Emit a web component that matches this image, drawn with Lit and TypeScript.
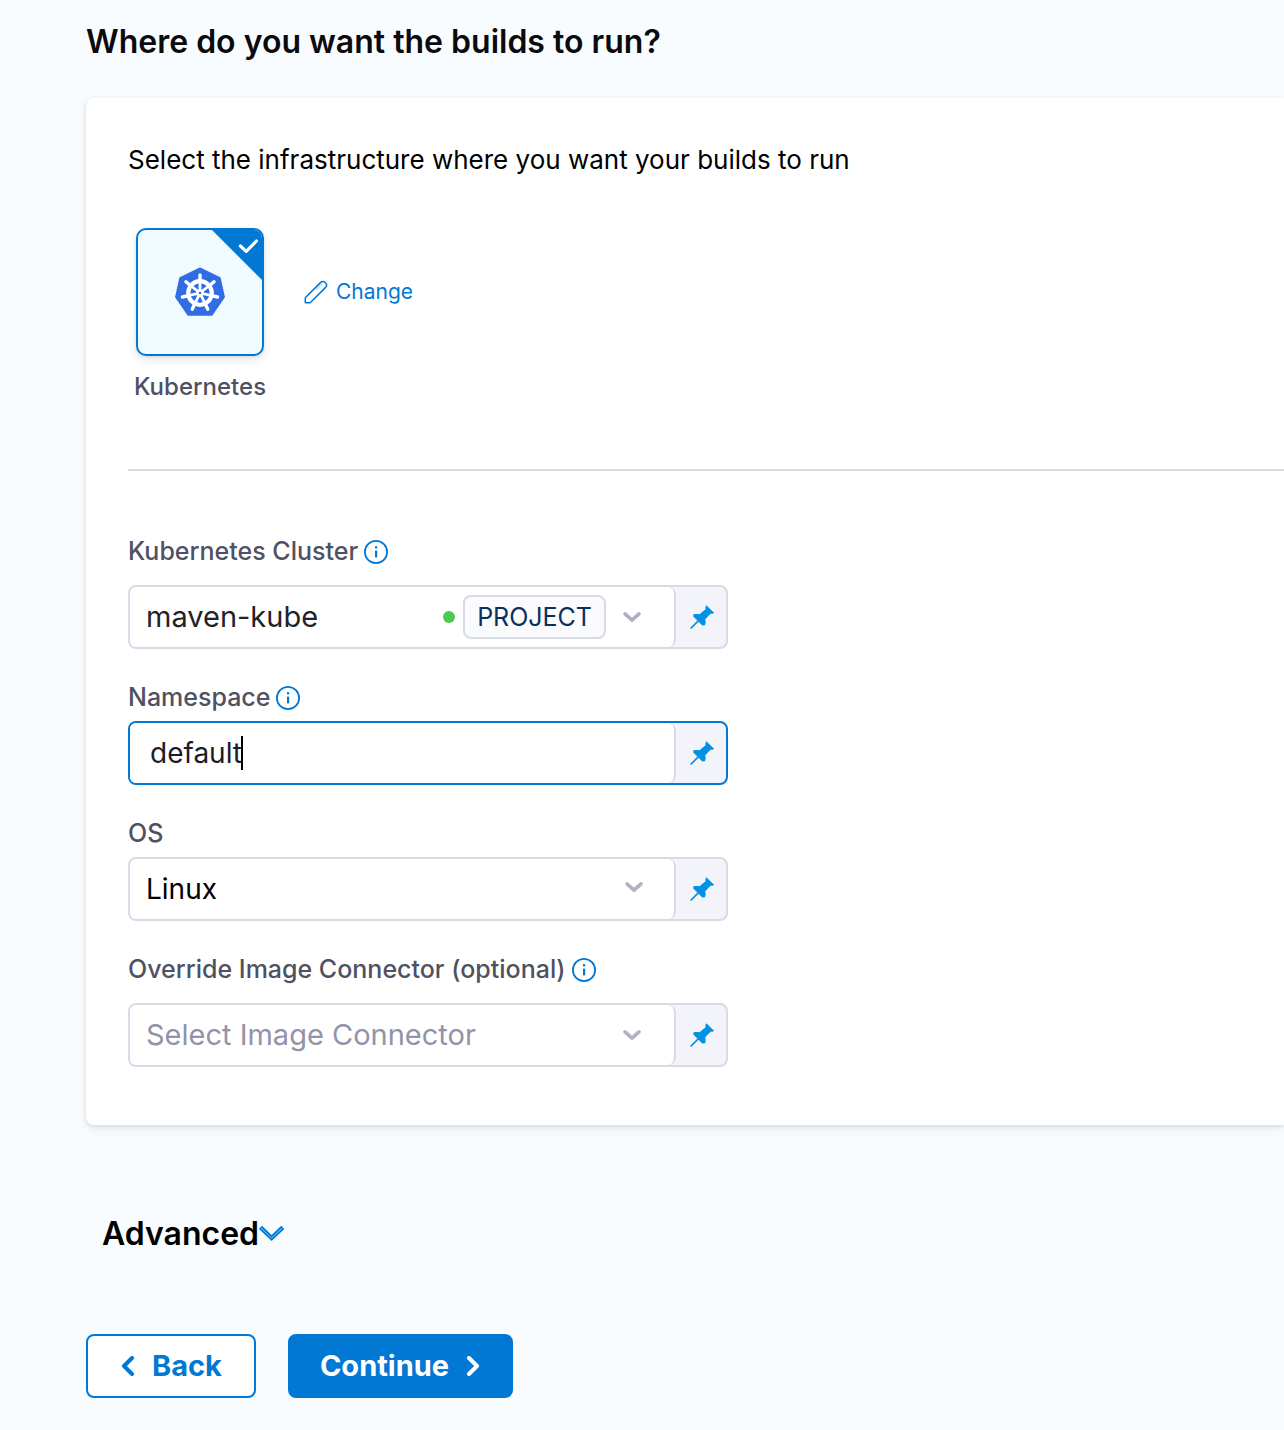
import { LitElement, html, svg, css } from "lit";
import { customElement, state } from "lit/decorators.js";

const FONT = css`Inter, "Liberation Sans", sans-serif`;

const spokeAngles = [0, 1, 2, 3, 4, 5, 6].map((i) => (i * 360) / 7);

const kubernetesLogo = html`
  <svg class="k8s" viewBox="0 0 50 50" aria-hidden="true">
    <path
      d="M25 1.2 45 10.8 49.2 30 36.8 48 13.2 48 0.8 30 5 10.8Z"
      fill="#326ce5" stroke="#326ce5" stroke-width="1.4" stroke-linejoin="round"
    />
    <circle cx="25" cy="26" r="11.8" fill="none" stroke="#fff" stroke-width="4.2" />
    ${spokeAngles.map(
      (a) => svg`<g transform="rotate(${a} 25 26)" stroke="#fff" stroke-linecap="round">
        <path d="M25 26V14" stroke-width="2.8" />
        <path d="M25 13V8" stroke-width="3.4" />
      </g>`
    )}
    <circle cx="25" cy="26" r="3.8" fill="#fff" />
    <circle cx="25" cy="26" r="1.2" fill="#326ce5" />
  </svg>
`;

const infoIcon = html`
  <svg class="info" viewBox="0 0 24 24" aria-hidden="true">
    <circle cx="12" cy="12" r="11.1" fill="none" stroke="currentColor" stroke-width="1.8" />
    <rect x="11" y="6.2" width="2.2" height="2.2" fill="currentColor" />
    <rect x="11" y="10.6" width="2.2" height="6.8" fill="currentColor" />
  </svg>
`;

const pinIcon = html`
  <svg class="pin" viewBox="0 0 24 24" aria-hidden="true">
    <path
      fill="currentColor"
      d="M16.4 0.3 24 7.7C23 8.8 21.8 9 20.6 8.8L15.2 14.2C15.8 16.4 15.8 18.6 15 20.2L12.2 20.4 8.6 16.8 1.2 24 0 22.9 7.4 15.6 3.2 11.6 3.4 9.4C5.4 8.8 7.4 8.8 9.4 9.2L15.6 4.2C15.2 2.8 15.4 1.4 16.4 0.3Z"
    />
  </svg>
`;

const chevronDown = html`
  <svg class="chevron" viewBox="0 0 20 12" aria-hidden="true">
    <path d="M3 2.8 10 9.2 17 2.8" fill="none" stroke="currentColor" stroke-width="3.6" stroke-linecap="round" stroke-linejoin="round" />
  </svg>
`;

@customElement("pinned-field")
export class PinnedField extends LitElement {
  static properties = { focused: { type: Boolean, reflect: true } };
  declare focused: boolean;

  static styles = css`
    :host {
      display: flex;
      box-sizing: border-box;
      height: 64px;
      border: 2px solid #d9dae6;
      border-radius: 8px;
      background: #f3f3fa;
      overflow: hidden;
    }
    :host([focused]) {
      border-color: #0278d5;
    }
    .content {
      display: flex;
      flex: 1;
      min-width: 0;
      box-sizing: border-box;
      background: #fff;
      border-right: 2px solid #d9dae6;
      border-radius: 0 8px 8px 0;
    }
    .type {
      display: flex;
      flex: none;
      align-items: center;
      justify-content: center;
      width: 50px;
      padding: 0 0 0 2px;
      border: 0;
      background: none;
      color: #0092e4;
      cursor: pointer;
    }
    .pin {
      width: 24px;
      height: 24px;
    }
  `;

  render() {
    return html`
      <div class="content"><slot></slot></div>
      <button class="type" type="button" aria-label="Fixed value">${pinIcon}</button>
    `;
  }
}

@customElement("app-root")
export class AppRoot extends LitElement {
  @state() private namespace = "default";

  static styles = css`
    :host {
      display: block;
      box-sizing: border-box;
      min-height: 100vh;
      padding: 22px 0 32px 86px;
      background: #f9fcff;
      color: #000;
      font-family: ${FONT};
    }
    button,
    input,
    select {
      margin: 0;
      font-family: inherit;
    }
    button {
      cursor: pointer;
    }
    h1,
    h2,
    p {
      margin: 0;
    }
    h1,
    h2 {
      font-size: 32px;
      line-height: 40px;
      font-weight: 600;
    }
    h1 {
      color: #0b0b0d;
    }
    .card {
      margin-top: 36px;
      padding: 46px 0 58px 42px;
      border-radius: 8px 0 0 8px;
      background: #fff;
      box-shadow: 0 1px 4px rgba(40, 41, 61, 0.1), 0 4px 8px rgba(96, 97, 112, 0.12);
    }
    .lead {
      font-size: 26px;
      line-height: 32px;
    }
    .infra {
      display: grid;
      grid-template-columns: 144px auto;
      justify-content: start;
      justify-items: center;
      align-items: center;
      column-gap: 32px;
      row-gap: 15px;
      margin-top: 52px;
    }
    .tile {
      position: relative;
      display: flex;
      align-items: center;
      justify-content: center;
      box-sizing: border-box;
      width: 128px;
      height: 128px;
      padding: 0;
      border: 2px solid #0278d5;
      border-radius: 10px;
      background: #effbff;
      box-shadow: 0 1px 3px rgba(40, 41, 61, 0.08), 0 4px 8px rgba(96, 97, 112, 0.16);
      overflow: hidden;
    }
    .corner {
      position: absolute;
      top: 0;
      right: 0;
      width: 50px;
      height: 50px;
    }
    .k8s {
      width: 50px;
      height: 50px;
    }
    .tile-name {
      color: #4f5162;
      font-size: 24px;
      line-height: 32px;
      font-weight: 500;
    }
    .change {
      display: flex;
      align-items: center;
      gap: 8px;
      padding: 0;
      border: 0;
      background: none;
      color: #0278d5;
      font-size: 21px;
      line-height: 24px;
    }
    .pencil {
      width: 24px;
      height: 24px;
    }
    hr {
      height: 2px;
      margin: 66px 0 64px;
      border: 0;
      background: #d9dae6;
    }
    .form {
      display: flex;
      flex-direction: column;
      gap: 32px;
      width: 100%;
      max-width: 600px;
    }
    .group {
      display: flex;
      flex-direction: column;
      gap: 8px;
    }
    .group.roomy {
      gap: 18px;
    }
    .label-row {
      display: flex;
      align-items: center;
      gap: 6px;
      height: 32px;
      color: #4f5162;
      font-size: 25px;
      line-height: 32px;
      font-weight: 500;
    }
    .help {
      display: flex;
      padding: 2px 0 0;
      border: 0;
      background: none;
      color: #0278d5;
    }
    .info {
      width: 24px;
      height: 24px;
    }
    .picker {
      display: flex;
      flex: 1;
      align-items: center;
      min-width: 0;
      padding: 0 32px 0 16px;
      border: 0;
      background: none;
      color: #22222a;
      font-size: 29px;
      line-height: 36px;
      text-align: left;
    }
    .value {
      flex: 1;
    }
    .placeholder {
      color: #9293ab;
    }
    .dot {
      width: 12px;
      height: 12px;
      margin-right: 8px;
      border-radius: 50%;
      background: #4dc952;
    }
    .scope {
      margin-right: 16px;
      padding: 4px 12px;
      border: 2px solid #d9dae6;
      border-radius: 8px;
      background: #fafbfc;
      color: #07305f;
      font-size: 25px;
      line-height: 32px;
    }
    .chevron {
      flex: none;
      width: 20px;
      height: 12px;
      color: #b0b1c4;
    }
    .text {
      display: flex;
      flex: 1;
      align-items: center;
      padding: 0 20px;
      cursor: text;
    }
    .text input {
      field-sizing: content;
      min-width: 2px;
      padding: 0;
      border: 0;
      outline: 0;
      background: none;
      color: #1c1c28;
      caret-color: transparent;
      font-size: 28px;
      line-height: 36px;
    }
    .caret {
      width: 2px;
      height: 34px;
      margin-left: -1px;
      background: #000;
    }
    .select {
      display: grid;
      flex: 1;
      align-items: center;
    }
    .select select,
    .select .chevron {
      grid-area: 1 / 1;
    }
    .select select {
      appearance: none;
      height: 100%;
      padding: 0 60px 0 16px;
      border: 0;
      outline: 0;
      background: none;
      color: #000;
      font-size: 28px;
    }
    .select .chevron {
      justify-self: end;
      margin: 0 30px 4px 0;
      pointer-events: none;
    }
    .advanced {
      margin: 89px 0 80px 16px;
    }
    .advanced button {
      display: flex;
      align-items: center;
      padding: 0;
      border: 0;
      background: none;
      color: inherit;
      font: inherit;
    }
    .expand {
      width: 26px;
      height: 18px;
    }
    .actions {
      display: flex;
      gap: 32px;
    }
    .btn {
      display: flex;
      align-items: center;
      gap: 16px;
      box-sizing: border-box;
      height: 64px;
      padding: 0 32px;
      border: 2px solid #0278d5;
      border-radius: 8px;
      background: #fff;
      color: #0278d5;
      font-size: 29px;
      line-height: 36px;
      font-weight: 700;
    }
    .btn.primary {
      padding: 0 30px;
      background: #0278d5;
      color: #fff;
    }
    .arrow {
      width: 16px;
      height: 20px;
    }
  `;

  private help(topic: string) {
    return html`<button class="help" type="button" aria-label="About ${topic}">${infoIcon}</button>`;
  }

  render() {
    return html`
      <h1>Where do you want the builds to run?</h1>

      <section class="card">
        <p class="lead">Select the infrastructure where you want your builds to run</p>

        <div class="infra">
          <button class="tile" type="button" aria-pressed="true" aria-labelledby="tile-name">
            ${kubernetesLogo}
            <svg class="corner" viewBox="0 0 50 50" aria-hidden="true">
              <path d="M0 0H50V50Z" fill="#0278d5" />
              <path d="M28.4 16 34.2 21.4 44.4 11" fill="none" stroke="#fff" stroke-width="3.2" stroke-linecap="round" stroke-linejoin="round" />
            </svg>
          </button>
          <button class="change" type="button">
            <svg class="pencil" viewBox="0 0 24 24" aria-hidden="true" fill="none" stroke="currentColor">
              <path d="M1.3 22.7V17.8L16.4 2.6C18 1.1 19.8 1.1 21.2 2.6L21.6 3C22.9 4.4 22.9 6 21.6 7.4L6.2 22.7Z" stroke-width="1.5" stroke-linejoin="round" />
              <path d="M13 8.8 17.4 4.6" stroke-width="2.4" opacity="0.2" stroke-linecap="round" />
            </svg>
            <span>Change</span>
          </button>
          <span class="tile-name" id="tile-name">Kubernetes</span>
        </div>

        <hr />

        <form class="form" @submit=${(e: Event) => e.preventDefault()}>
          <div class="group roomy">
            <div class="label-row">
              <label for="cluster">Kubernetes Cluster</label>${this.help("Kubernetes Cluster")}
            </div>
            <pinned-field>
              <button class="picker" id="cluster" type="button">
                <span class="value">maven-kube</span>
                <span class="dot"></span>
                <span class="scope">PROJECT</span>
                ${chevronDown}
              </button>
            </pinned-field>
          </div>

          <div class="group">
            <div class="label-row">
              <label for="namespace">Namespace</label>${this.help("Namespace")}
            </div>
            <pinned-field focused>
              <label class="text">
                <input
                  id="namespace"
                  type="text"
                  size=${Math.max(this.namespace.length, 1)}
                  .value=${this.namespace}
                  @input=${(e: Event) => (this.namespace = (e.target as HTMLInputElement).value)}
                />
                <span class="caret"></span>
              </label>
            </pinned-field>
          </div>

          <div class="group">
            <div class="label-row"><label for="os">OS</label></div>
            <pinned-field>
              <div class="select">
                <select id="os">
                  <option selected>Linux</option>
                </select>
                ${chevronDown}
              </div>
            </pinned-field>
          </div>

          <div class="group roomy">
            <div class="label-row">
              <label for="connector">Override Image Connector (optional)</label>${this.help("Override Image Connector")}
            </div>
            <pinned-field>
              <button class="picker" id="connector" type="button">
                <span class="value placeholder">Select Image Connector</span>
                ${chevronDown}
              </button>
            </pinned-field>
          </div>
        </form>
      </section>

      <h2 class="advanced">
        <button type="button" aria-expanded="false">
          <span>Advanced</span>
          <svg class="expand" viewBox="0 0 26 18" aria-hidden="true" fill="none">
            <path d="M1.4 2.4 12.6 13 23.8 2.4" stroke="#0278d5" stroke-width="4.4" />
            <path d="M2 3 12.6 13 23.2 3" stroke="#8cc4f0" stroke-width="1" />
          </svg>
        </button>
      </h2>

      <div class="actions">
        <button class="btn" type="button">
          <svg class="arrow" viewBox="0 0 16 20" aria-hidden="true">
            <path d="M12 2 4 10 12 18" fill="none" stroke="currentColor" stroke-width="4" stroke-linecap="round" stroke-linejoin="round" />
          </svg>
          <span>Back</span>
        </button>
        <button class="btn primary" type="button">
          <span>Continue</span>
          <svg class="arrow" viewBox="0 0 16 20" aria-hidden="true">
            <path d="M4 2 12 10 4 18" fill="none" stroke="currentColor" stroke-width="4" stroke-linecap="round" stroke-linejoin="round" />
          </svg>
        </button>
      </div>
    `;
  }
}
